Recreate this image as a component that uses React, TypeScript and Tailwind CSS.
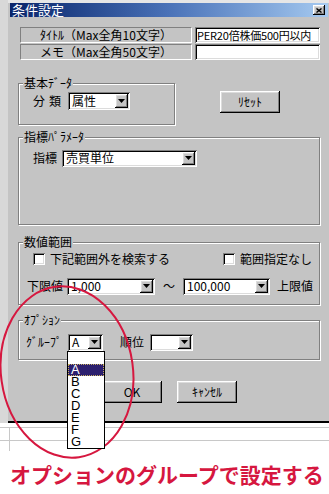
const raised =
  'shadow-[inset_-1px_-1px_#000,inset_1px_1px_#fff,inset_-2px_-2px_#808080,inset_2px_2px_#dcdcdc]'
const sunken =
  'shadow-[inset_1px_1px_#808080,inset_-1px_-1px_#fff,inset_2px_2px_#000,inset_-2px_-2px_#dcdcdc]'

function ArrowButton() {
  return (
    <div className={`flex h-full w-[13px] shrink-0 items-center justify-center bg-[#c4c4c4] ${raised}`}>
      <svg width="7" height="4" viewBox="0 0 7 4">
        <path d="M0 0h7L3.5 4z" fill="#000" />
      </svg>
    </div>
  )
}

function Combo({ value, className, children }: { value?: string; className: string; children?: React.ReactNode }) {
  return (
    <div className={`relative flex items-stretch bg-white p-[2px] ${sunken} ${className}`}>
      <span className="flex flex-1 items-center whitespace-nowrap pl-[2px] text-[12px] leading-[12px]">{value}</span>
      <ArrowButton />
      {children}
    </div>
  )
}

function Group({ label, className, children }: { label: string; className: string; children: React.ReactNode }) {
  return (
    <div className={`relative border border-[#808080] shadow-[inset_1px_1px_#fff,1px_1px_#fff] ${className}`}>
      <span className="absolute left-[4px] top-[-8px] bg-[#c4c4c4] px-[1px] text-[12px] leading-[14px]">{label}</span>
      {children}
    </div>
  )
}

function Button({ label, className }: { label: string; className: string }) {
  return (
    <div className={`flex h-[22px] w-[60px] items-center justify-center bg-[#c4c4c4] text-[12px] leading-none ${raised} ${className}`}>
      {label}
    </div>
  )
}

function Checkbox() {
  return <div className={`h-[12px] w-[12px] bg-white ${sunken}`} />
}

const groups = ['A', 'B', 'C', 'D', 'E', 'F', 'G']

export default function App() {
  return (
    <div className="relative h-[494px] w-[329px] overflow-hidden bg-white font-['Noto_Sans_CJK_JP',sans-serif] text-black">
      <div className="flex h-[423px]">
        <div className="w-[8px] bg-[#d8d8d8]" />
        <div className="flex flex-1 flex-col border-b-2 border-black bg-[#c4c4c4]">
          <div className="h-[3px] bg-[#e6e6e6]" />
          <div className="ml-[2px] mr-px flex h-[14px] items-center justify-between bg-gradient-to-r from-[#0a246a] via-[#4a72b8] to-[#a6caf0] pl-[2px] pr-[3px]">
            <span className="text-[13px] leading-[14px] text-white">条件設定</span>
            <div className={`flex h-[10px] w-[12px] items-center justify-center bg-[#c4c4c4] ${raised}`}>
              <svg width="6" height="5" viewBox="0 0 6 5">
                <path d="M0.5 0.5L5.5 4.5M5.5 0.5L0.5 4.5" stroke="#000" strokeWidth="1.4" />
              </svg>
            </div>
          </div>

          <div className="flex flex-col pl-[10px]">
            <div className="ml-[2px] mt-[10px] flex h-[16px] gap-[3px]">
              <div className="flex w-[172px] items-center justify-center border border-b-white border-l-[#808080] border-r-white border-t-[#808080] text-[12px] leading-none">
                ﾀｲﾄﾙ（Max全角10文字）
              </div>
              <div className={`flex w-[125px] items-center whitespace-nowrap bg-white pl-[2px] text-[11px] leading-none tracking-[-0.2px] ${sunken}`}>
                PER20倍株価500円以内
              </div>
            </div>
            <div className="ml-[2px] mt-px flex h-[16px] gap-[3px]">
              <div className="flex w-[172px] items-center justify-center border border-b-white border-l-[#808080] border-r-white border-t-[#808080] text-[12px] leading-none">
                メモ（Max全角50文字）
              </div>
              <div className={`w-[125px] bg-white ${sunken}`} />
            </div>

            <div className="mt-[23px] flex items-start">
              <Group label="基本ﾃﾞｰﾀ" className="h-[42px] w-[157px]">
                <div className="ml-[14px] mt-[8px] flex items-center">
                  <span className="w-[35px] text-[12px] tracking-[4px]">分類</span>
                  <Combo value="属性" className="h-[18px] w-[62px]" />
                </div>
              </Group>
              <Button label="ﾘｾｯﾄ" className="ml-[45px] mt-[8px]" />
            </div>

            <Group label="指標ﾊﾟﾗﾒｰﾀ" className="mt-[12px] h-[88px] w-[302px]">
              <div className="ml-[14px] mt-[11px] flex items-center">
                <span className="w-[29px] text-[12px]">指標</span>
                <Combo value="売買単位" className="h-[17px] w-[135px]" />
              </div>
            </Group>

            <Group label="数値範囲" className="mt-[17px] h-[63px] w-[302px]">
              <div className="ml-[14px] mr-[7px] mt-[10px] flex h-[12px] items-center justify-between text-[12px]">
                <div className="flex items-center gap-[5px]">
                  <Checkbox />
                  <span>下記範囲外を検索する</span>
                </div>
                <div className="flex items-center gap-[5px]">
                  <Checkbox />
                  <span>範囲指定なし</span>
                </div>
              </div>
              <div className="ml-[8px] mt-[12px] flex items-center text-[12px]">
                <span className="w-[40px]">下限値</span>
                <Combo value="1,000" className="h-[17px] w-[88px]" />
                <span className="w-[28px] text-center">～</span>
                <Combo value="100,000" className="h-[17px] w-[87px]" />
                <span className="ml-[7px]">上限値</span>
              </div>
            </Group>

            <Group label="ｵﾌﾟｼｮﾝ" className="mt-[15px] h-[40px] w-[302px]">
              <div className="ml-[7px] mt-[12px] flex items-center text-[12px]">
                <span className="w-[42px]">ｸﾞﾙｰﾌﾟ</span>
                <Combo value="A" className="z-10 h-[17px] w-[35px]">
                  <div className="absolute left-[-1px] top-[17px] w-[38px] border border-black bg-white font-['Liberation_Sans',sans-serif] text-[13px] leading-[12px]">
                    <div className="h-[12px]" />
                    {groups.map((g) => (
                      <div
                        key={g}
                        className={
                          g === 'A'
                            ? 'h-[12px] border border-dotted border-[#c8b060] bg-[#2c1f6e] pl-[2px] leading-[10px] text-white'
                            : 'h-[12px] pl-[3px]'
                        }
                      >
                        {g}
                      </div>
                    ))}
                  </div>
                </Combo>
                <span className="ml-[17px] w-[30px]">順位</span>
                <Combo className="h-[17px] w-[43px]" />
              </div>
            </Group>

            <div className="mt-[21px] flex">
              <Button label="OK" className="ml-[84px]" />
              <Button label="ｷｬﾝｾﾙ" className="ml-[15px]" />
            </div>
          </div>
        </div>
      </div>

      <div className="h-[4px]" />
      <div className="h-px bg-[#c8c8c8]" />
      <div className="ml-[9px] h-[12px] border-l border-[#c8c8c8]" />
      <div className="h-px bg-[#c8c8c8]" />
      <div className="ml-[9px] h-[10px] border-l border-[#c8c8c8]" />

      <div className="ml-[10px] mt-[9px] whitespace-nowrap text-[21px] font-bold leading-[28px] text-[#d6173f]">
        オプションのグループで設定する
      </div>

      <svg className="pointer-events-none absolute left-0 top-0" width="329" height="494" viewBox="0 0 329 494">
        <ellipse cx="67" cy="372" rx="66" ry="86" transform="rotate(-8 67 372)" fill="none" stroke="#d6173f" strokeWidth="2" />
      </svg>
    </div>
  )
}
